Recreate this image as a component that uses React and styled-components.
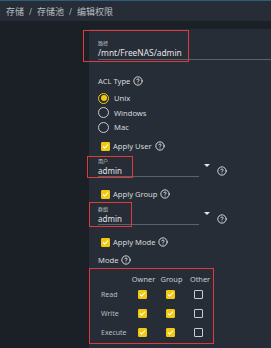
import React from 'react';
import styled, { createGlobalStyle } from 'styled-components';

const GlobalStyle = createGlobalStyle`
  html, body {
    margin: 0;
    padding: 0;
    background: #1b2027;
    overflow: hidden;
  }
  * {
    box-sizing: border-box;
  }
`;

const Page = styled.div`
  width: 271px;
  height: 348px;
  display: flex;
  flex-direction: column;
  background: #1b2027;
  font-family: "Noto Sans", "Open Sans", "Noto Sans CJK SC", sans-serif;
  color: #d6d9dc;
  overflow: hidden;
`;

const TopBar = styled.div`
  height: 21px;
  flex-shrink: 0;
  display: flex;
  align-items: center;
  padding-left: 6px;
  background: #262d36;
  border-top: 1px solid #2d5d7e;
`;

const Crumb = styled.span`
  font-family: "Noto Sans CJK SC", sans-serif;
  font-size: 9px;
  color: #b9bec3;
`;

const Slash = styled.span`
  font-size: 8px;
  color: #a9aeb3;
  margin: 0 5px;
`;

const Body = styled.div`
  flex: 1;
  display: flex;
  padding-top: 8px;
`;

const Side = styled.div`
  width: 89px;
  flex-shrink: 0;
`;

const Card = styled.div`
  flex: 1;
  background: #262d36;
  padding-left: 9px;
  display: flex;
  flex-direction: column;
`;

const Field = styled.div`
  position: relative;
  width: ${({ width }) => width};
  margin-top: ${({ top }) => top}px;
  border-bottom: 1px solid #5b6168;
`;

const FieldLabel = styled.div`
  font-family: "Noto Sans CJK SC", sans-serif;
  font-size: 5px;
  line-height: 8px;
  color: #c9cdd1;
`;

const FieldValue = styled.div`
  font-size: ${({ size }) => size}px;
  line-height: ${({ lh }) => lh}px;
  color: #e2e4e6;
`;

const Highlight = styled.div`
  position: absolute;
  top: ${({ t }) => t}px;
  left: ${({ l }) => l}px;
  width: ${({ w }) => w}px;
  height: ${({ h }) => h}px;
  border: 1.5px solid #df3a3e;
  pointer-events: none;
`;

const Line = styled.div`
  display: flex;
  align-items: center;
  gap: 3px;
  height: 12px;
  margin-top: ${({ top }) => top}px;
  padding-left: ${({ indent }) => indent || 0}px;
  font-size: 7.6px;
  color: #d6d9dc;
`;

const RadioGroup = styled.div`
  display: flex;
  flex-direction: column;
  margin-top: 4px;
`;

const RadioRow = styled.div`
  display: flex;
  align-items: center;
  height: 14.5px;
  gap: 5px;
  font-size: 7.6px;
  color: #d6d9dc;
`;

const Radio = styled.span`
  width: 11px;
  height: 11px;
  border-radius: 50%;
  border: 1px solid ${({ on }) => (on ? '#f2c811' : '#c9cdd1')};
  display: flex;
  align-items: center;
  justify-content: center;

  &::after {
    content: '';
    width: 6px;
    height: 6px;
    border-radius: 50%;
    background: ${({ on }) => (on ? '#f2c811' : 'transparent')};
  }
`;

const Box = styled.span`
  width: 9px;
  height: 9px;
  flex-shrink: 0;
  border-radius: 1px;
  background: ${({ on }) => (on ? '#f2c811' : 'transparent')};
  border: 1px solid ${({ on }) => (on ? '#f2c811' : '#c9cdd1')};
  display: flex;
  align-items: center;
  justify-content: center;
`;

const SelectRow = styled.div`
  display: flex;
  align-items: flex-end;
  margin-top: ${({ top }) => top}px;
`;

const Arrow = styled.span`
  width: 0;
  height: 0;
  margin: 0 0 10px 5px;
  border-left: 3px solid transparent;
  border-right: 3px solid transparent;
  border-top: 3px solid #e4e6e8;
`;

const HelpSlot = styled.span`
  display: flex;
  margin: 0 0 ${({ bottom }) => bottom || 0}px ${({ left }) => left || 0}px;
`;

const ModeTable = styled.div`
  margin: 2px 0 0 -9px;
  width: 125px;
  border: 1.5px solid #df3a3e;
  padding: 0 0 1px 11px;
  display: grid;
  grid-template-columns: 29px 27px 29px 28px;
  grid-template-rows: 16px repeat(3, 19px);
  align-items: center;
`;

const HeadCell = styled.span`
  font-size: 7.4px;
  color: #c9cdd1;
  text-align: center;
  padding-top: 3px;
`;

const RowLabel = styled.span`
  font-size: 7px;
  color: #b9bec3;
`;

const Cell = styled.span`
  display: flex;
  justify-content: center;
  padding-right: ${({ shift }) => shift || 0}px;
`;

const Help = ({ size = 10 }) => (
  <svg width={size} height={size} viewBox="0 0 24 24" fill="none" stroke="#e4e6e8" strokeWidth="2.2" strokeLinecap="round" strokeLinejoin="round">
    <circle cx="12" cy="12" r="10" />
    <path d="M9.1 9a3 3 0 0 1 5.8 1c0 2-3 3-3 3" />
    <path d="M12 17h.01" />
  </svg>
);

const Check = () => (
  <svg width="7" height="7" viewBox="0 0 24 24" fill="none" stroke="#ffffff" strokeWidth="3.5" strokeLinecap="round" strokeLinejoin="round">
    <path d="M4 12.5l5 5L20 6.5" />
  </svg>
);

const CheckBox = ({ on }) => <Box on={on ? 1 : 0}>{on && <Check />}</Box>;

const modes = [
  { name: 'Read', perms: [true, true, false] },
  { name: 'Write', perms: [true, true, false] },
  { name: 'Execute', perms: [true, true, false] },
];

const App = () => (
  <Page>
    <GlobalStyle />
    <TopBar>
      <Crumb>存储</Crumb>
      <Slash>/</Slash>
      <Crumb>存储池</Crumb>
      <Slash>/</Slash>
      <Crumb>编辑权限</Crumb>
    </TopBar>
    <Body>
      <Side />
      <Card>
        <Field width="auto" top={10}>
          <FieldLabel>路径</FieldLabel>
          <FieldValue size={8.4} lh={12}>/mnt/FreeNAS/admin</FieldValue>
          <Highlight t={-9} l={-15} w={106} h={32} />
        </Field>

        <Line top={15}>
          ACL Type <HelpSlot><Help /></HelpSlot>
        </Line>
        <RadioGroup>
          <RadioRow><Radio on={1} />Unix</RadioRow>
          <RadioRow><Radio />Windows</RadioRow>
          <RadioRow><Radio />Mac</RadioRow>
        </RadioGroup>

        <Line top={5.5} indent={3}>
          <CheckBox on />Apply User <HelpSlot><Help /></HelpSlot>
        </Line>
        <SelectRow top={5}>
          <Field width="101px" top={0}>
            <FieldLabel>用户</FieldLabel>
            <FieldValue size={8} lh={11}>admin</FieldValue>
            <Highlight t={-1} l={-11} w={46} h={22} />
          </Field>
          <Arrow />
          <HelpSlot left={7} bottom={1}><Help /></HelpSlot>
        </SelectRow>

        <Line top={11} indent={3}>
          <CheckBox on />Apply Group <HelpSlot><Help /></HelpSlot>
        </Line>
        <SelectRow top={5}>
          <Field width="101px" top={0}>
            <FieldLabel>群组</FieldLabel>
            <FieldValue size={8} lh={11}>admin</FieldValue>
            <Highlight t={-3} l={-9} w={43} h={25} />
          </Field>
          <Arrow />
          <HelpSlot left={7} bottom={1}><Help /></HelpSlot>
        </SelectRow>

        <Line top={11} indent={3}>
          <CheckBox on />Apply Mode <HelpSlot><Help /></HelpSlot>
        </Line>
        <Line top={6}>
          Mode <HelpSlot><Help /></HelpSlot>
        </Line>

        <ModeTable>
          <span />
          <HeadCell>Owner</HeadCell>
          <HeadCell>Group</HeadCell>
          <HeadCell>Other</HeadCell>
          {modes.map((m) => (
            <React.Fragment key={m.name}>
              <RowLabel>{m.name}</RowLabel>
              {m.perms.map((p, i) => (
                <Cell key={i} shift={3}>
                  <CheckBox on={p} />
                </Cell>
              ))}
            </React.Fragment>
          ))}
        </ModeTable>
      </Card>
    </Body>
  </Page>
);

export default App;
